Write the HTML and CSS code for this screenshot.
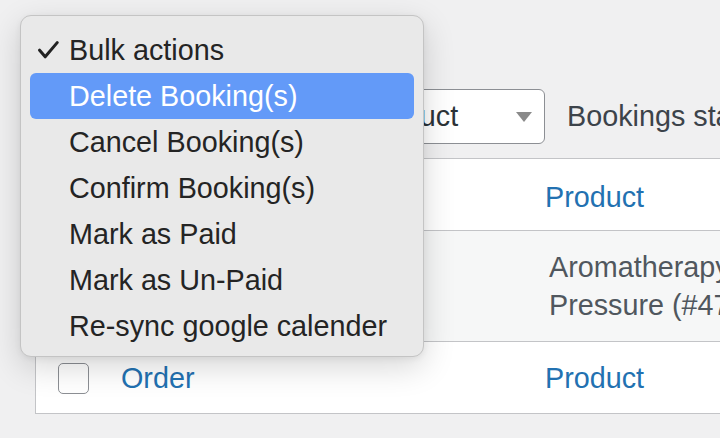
FILE: index.html
```html
<!DOCTYPE html>
<html lang="en">
<head>
<meta charset="utf-8">
<title>Bookings</title>
<link rel="stylesheet" href="styles.css">
</head>
<body>
<div class="page">
  <div class="toolbar">
    <div class="select bulk"><span class="arrow"></span></div>
    <div class="select filter">Filter by product<span class="arrow"></span></div>
    <span class="label">Bookings status</span>
  </div>
  <div class="table">
    <div class="row head">
      <div class="cell cb"><span class="checkbox"></span></div>
      <div class="cell order"></div>
      <div class="cell product"><a>Product</a></div>
    </div>
    <div class="row body">
      <div class="cell cb"><span class="checkbox"></span></div>
      <div class="cell order"></div>
      <div class="cell product text">Aromatherapy<br>Pressure (#4711)</div>
    </div>
    <div class="row foot">
      <div class="cell cb"><span class="checkbox"></span></div>
      <div class="cell order"><a>Order</a></div>
      <div class="cell product"><a>Product</a></div>
    </div>
  </div>
</div>

<div class="menu">
  <div class="item checked"><svg class="check" width="21" height="18" viewBox="0 0 21 18"><path d="M1.6 9.2 L7.2 15.8 L19.2 1.6" fill="none" stroke="#222" stroke-width="3" stroke-linecap="round" stroke-linejoin="round"/></svg>Bulk actions</div>
  <div class="item active">Delete Booking(s)</div>
  <div class="item">Cancel Booking(s)</div>
  <div class="item">Confirm Booking(s)</div>
  <div class="item">Mark as Paid</div>
  <div class="item">Mark as Un-Paid</div>
  <div class="item">Re-sync google calender</div>
</div>
</body>
</html>
```

FILE: styles.css
```css
html, body {
  margin: 0;
  padding: 0;
  width: 720px;
  height: 438px;
  overflow: hidden;
  background: #f0f0f1;
  font-family: "Liberation Sans", Arial, sans-serif;
}

.page {
  padding: 89px 0 0 35px;
  font-size: 28.75px;
  color: #3c434a;
}

.toolbar {
  display: flex;
  align-items: center;
  gap: 22px;
  height: 55px;
  white-space: nowrap;
}

.select {
  position: relative;
  box-sizing: border-box;
  height: 55px;
  line-height: 53px;
  padding: 0 48px 0 17px;
  background: #fff;
  border: 1px solid #8c8f94;
  border-radius: 6px;
  color: #2c3338;
  flex: none;
}

.bulk { width: 177px; }
.filter { width: 311px; }

.arrow {
  position: absolute;
  right: 12px;
  top: 22px;
  width: 0;
  height: 0;
  border-left: 8px solid transparent;
  border-right: 8px solid transparent;
  border-top: 10px solid #8a8a8a;
}

.label { color: #3c434a; }

.table {
  margin-top: 14px;
  width: 1000px;
  background: #fff;
  border: 1px solid #c3c4c7;
}

.row {
  display: grid;
  grid-template-columns: 68px 424px 1fr;
  align-items: center;
}

.head {
  box-sizing: border-box;
  height: 72px;
  padding-top: 5px;
  border-bottom: 1px solid #c3c4c7;
}

.body {
  background: #f6f7f7;
  height: 110px;
  border-bottom: 1px solid #c3c4c7;
}

.foot { height: 70px; padding-top: 1px; }

.cell a {
  color: #2271b1;
  text-decoration: none;
}

.cb { padding-left: 22px; display: flex; }
.order { padding-left: 17px; }
.product { padding-left: 17px; white-space: nowrap; }

.text {
  padding-left: 21px;
  color: #50575e;
  line-height: 38.5px;
}

.checkbox {
  display: block;
  box-sizing: border-box;
  width: 31px;
  height: 31px;
  background: #fff;
  border: 1.5px solid #8c8f94;
  border-radius: 5px;
}

.body .cb { align-self: start; padding-top: 22px; }

.menu {
  position: absolute;
  left: 20px;
  top: 15px;
  box-sizing: border-box;
  width: 404px;
  height: 342px;
  padding: 11px 9px 9px;
  background: #e9e9e9;
  border: 1px solid #c4c4c4;
  border-radius: 11px;
  box-shadow: 0 10px 32px rgba(0, 0, 0, 0.16), 0 2px 6px rgba(0, 0, 0, 0.06);
  font-family: "Liberation Sans", Arial, sans-serif;
  font-size: 28.75px;
  color: #242424;
}

.item {
  position: relative;
  height: 46px;
  line-height: 46px;
  padding-left: 39px;
  border-radius: 6px;
  white-space: nowrap;
}

.item.active {
  background: #639af8;
  color: #fff;
}

.check {
  position: absolute;
  left: 8px;
  top: 14px;
}
```
